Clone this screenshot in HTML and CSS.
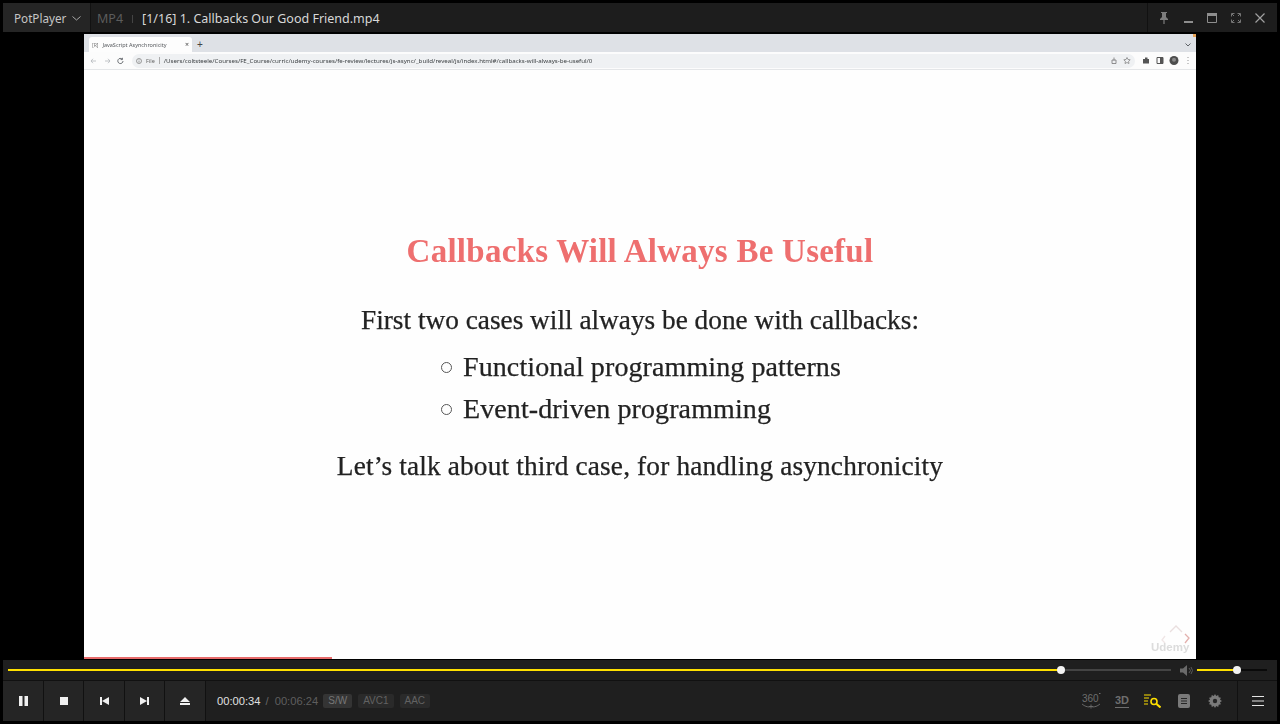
FILE: index.html
```html
<!DOCTYPE html>
<html lang="en">
<head>
<meta charset="utf-8">
<title>PotPlayer</title>
<link rel="stylesheet" href="styles.css">
</head>
<body>
<div class="player">
  <header class="titlebar">
    <div class="brand"><span>PotPlayer</span>
      <svg class="chev" width="9" height="5" viewBox="0 0 9 5"><path d="M.5.5l4 3.5 4-3.5" fill="none" stroke="#a8a8a8"/></svg>
    </div>
    <div class="title"><span class="fmt">MP4</span><span class="tick"></span><span class="name">[1/16] 1. Callbacks Our Good Friend.mp4</span></div>
    <div class="winbtns">
      <svg width="12" height="12" viewBox="0 0 12 12"><path d="M3 0h6v1H8v4l2 2v1H6.600v4H5.400V8H2V7l2-2V1H3z" fill="#7c7c7c"/></svg>
      <svg width="11" height="12" viewBox="0 0 11 12"><path d="M1 9h9v2H1z" fill="#8e8e8e"/></svg>
      <svg width="10" height="10" viewBox="0 0 10 10"><path d="M.5.500h9v9h-9z" fill="none" stroke="#8e8e8e"/><path d="M0 0h10v3H0z" fill="#8e8e8e"/></svg>
      <svg width="10" height="10" viewBox="0 0 10 10"><path d="M.5 3.500v-3h3M6.500.500h3v3M9.500 6.500v3h-3M3.500 9.500h-3v-3M1 1l2 2M9 1L7 3M9 9L7 7M1 9l2-2" fill="none" stroke="#757575"/></svg>
      <svg width="10" height="10" viewBox="0 0 10 10"><path d="M.5.500l9 9M9.500.500l-9 9" stroke="#a0a0a0" stroke-width="1.200"/></svg>
    </div>
  </header>

  <main class="stage">
    <div class="video">
      <div class="tabstrip">
        <div class="tab"><span class="favicon">[R]</span><span class="tabname">JavaScript Asynchronicity</span><span class="tabx">×</span></div>
        <span class="newtab">+</span>
        <svg class="tabmenu" width="6" height="4" viewBox="0 0 6 4"><path d="M.5.500L3 3 5.500.500" fill="none" stroke="#5f6368"/></svg>
        <span class="orange"></span>
      </div>
      <div class="toolbar">
        <svg class="nav" width="36" height="8" viewBox="0 0 36 8"><path d="M6 4H1M3 1.800L1 4l2 2.200" fill="none" stroke="#b4b7bb" stroke-width=".8"/><path d="M15 4h5M18 1.800L20 4l-2 2.200" fill="none" stroke="#b4b7bb" stroke-width=".8"/><path d="M33 4a2.600 2.600 0 1 1-.8-1.900M32.400 .8v1.800h-1.800" fill="none" stroke="#5f6368" stroke-width=".9"/></svg>
        <div class="omnibox">
          <svg width="6" height="6" viewBox="0 0 6 6"><circle cx="3" cy="3" r="2.500" fill="none" stroke="#777" stroke-width=".7"/><path d="M3 2.500v2M3 1.300v.6" stroke="#777" stroke-width=".7"/></svg>
          <span class="scheme">File</span><span class="omnisep"></span>
          <span class="url">/Users/coltsteele/Courses/FE_Course/curric/udemy-courses/fe-review/lectures/js-async/_build/reveal/js/index.html#/callbacks-will-always-be-useful/0</span>
          <svg class="omniicons" width="20" height="7" viewBox="0 0 20 7"><path d="M1 3h4v3.500H1zM3 .5v3" fill="none" stroke="#777" stroke-width=".8"/><path d="M16 .5l1 2 2.200.3-1.600 1.500.4 2.200-2-1-2 1 .4-2.200-1.600-1.500 2.200-.3z" fill="none" stroke="#777" stroke-width=".7"/></svg>
        </div>
        <svg class="exticons" width="48" height="9" viewBox="0 0 48 9"><path d="M0 3h2V1.500h2.500V3H6v4.500H0z" fill="#555"/><path d="M14 1.500h6v6h-6z" fill="none" stroke="#555"/><path d="M17 1.500h3v6h-3z" fill="#555"/><circle cx="31" cy="4.500" r="4.500" fill="#4d4d4d"/><circle cx="31" cy="3.800" r="2" fill="#8b8b8b"/><path d="M45 1v.9M45 4v.9M45 7v.9" stroke="#888"/></svg>
      </div>
      <article class="slide">
        <h1 class="slidetitle">Callbacks Will Always Be Useful</h1>
        <p class="lead">First two cases will always be done with callbacks:</p>
        <ul class="cases">
          <li>Functional programming patterns</li>
          <li>Event-driven programming</li>
        </ul>
        <p class="closing">Let’s talk about third case, for handling asynchronicity</p>
      </article>
      <div class="watermark">
        <svg width="30" height="24" viewBox="0 0 30 24"><path d="M9 9l6-6 6 6" fill="none" stroke="#eadfdf" stroke-width="1.300"/><path d="M4 13l-3 4 3 3" fill="none" stroke="#f0e6e6" stroke-width="1.300"/><path d="M24 11l4 4-4 5" fill="none" stroke="#e3b0ad" stroke-width="1.300"/></svg>
        <span>Udemy</span>
      </div>
      <div class="vprogress"></div>
    </div>
  </main>

  <footer class="controls">
    <div class="seekrow">
      <div class="seek"><div class="seekfill"></div><div class="knob"></div></div>
      <svg class="speaker" width="13" height="11" viewBox="0 0 13 11"><path d="M0 3.500h3L7 0v11L3 7.500H0z" fill="#6a6a6a"/><path d="M9 3l1.500 2.500L9 8M11 2l1.500 3.500L11 9" fill="none" stroke="#5a5a5a"/></svg>
      <div class="volume"><div class="volfill"></div><div class="knob"></div></div>
    </div>
    <div class="btnrow">
      <div class="transport">
        <button class="tbtn"><svg width="9" height="10" viewBox="0 0 9 10"><path d="M0 0h3.500v10H0zM5.500 0H9v10H5.500z" fill="#f0f0f0"/></svg></button>
        <button class="tbtn"><svg width="8" height="8" viewBox="0 0 8 8"><path d="M0 0h8v8H0z" fill="#f0f0f0"/></svg></button>
        <button class="tbtn"><svg width="9" height="8" viewBox="0 0 9 8"><path d="M0 0h2v8H0zM9 0v8L2 4z" fill="#f0f0f0"/></svg></button>
        <button class="tbtn"><svg width="9" height="8" viewBox="0 0 9 8"><path d="M9 0H7v8h2zM0 0v8l7-4z" fill="#f0f0f0"/></svg></button>
        <button class="tbtn"><svg width="10" height="8" viewBox="0 0 10 8"><path d="M5 0l5 5H0zM0 6h10v2H0z" fill="#f0f0f0"/></svg></button>
      </div>
      <div class="timeinfo">
        <span class="now">00:00:34</span><span class="slash">/</span><span class="total">00:06:24</span>
        <span class="badge sw">S/W</span><span class="badge">AVC1</span><span class="badge">AAC</span>
      </div>
      <div class="tools">
        <svg width="20" height="18" viewBox="0 0 20 18"><text x="1" y="10" class="t360">360</text><path d="M18 1.500h1.500" stroke="#6e6e6e"/><path d="M1 12c3 2.500 5 2.800 7.500 3M19 12c-3 2.500-5 2.800-7.500 3M10 12.500v4M8 14.500h4" fill="none" stroke="#6e6e6e" stroke-width=".9"/></svg>
        <svg width="14" height="16" viewBox="0 0 14 16"><text x="0" y="11" class="t3d">3D</text><path d="M0 14.500h14" stroke="#6e6e6e"/></svg>
        <svg width="17" height="14" viewBox="0 0 17 14"><path d="M0 1h7M0 4h5M0 7h4M0 10h4" stroke="#ffe000" stroke-width="1"/><circle cx="10" cy="7.500" r="3" fill="none" stroke="#ffe000" stroke-width="1.600"/><path d="M12.500 10l4 3.500" stroke="#ffe000" stroke-width="2"/></svg>
        <svg width="12" height="14" viewBox="0 0 12 14"><rect width="12" height="14" rx="2" fill="#7a7a7a"/><path d="M3 4.500h6M3 7h6M3 9.500h6" stroke="#262626"/></svg>
        <svg width="14" height="14" viewBox="0 0 14 14"><path d="M7 0l1.200 2 2-.9.500 2.200 2.200.5-.9 2L14 7l-2 1.200.9 2-2.200.5-.5 2.200-2-.9L7 14l-1.200-2-2 .9-.5-2.200-2.200-.5.9-2L0 7l2-1.200-.9-2 2.200-.5.500-2.200 2 .9z" fill="#7a7a7a"/><circle cx="7" cy="7" r="2.200" fill="#262626"/></svg>
      </div>
      <button class="menu"><svg width="12" height="10" viewBox="0 0 12 10"><path d="M0 .5h12M0 5h12M0 9.500h12" stroke="#e4e4e4"/></svg></button>
    </div>
  </footer>
</div>
</body>
</html>
```
FILE: styles.css
```css
* { box-sizing: border-box; }
html, body { margin: 0; height: 100%; background: #000; }
body { overflow: hidden; font-family: "Noto Sans", "Liberation Sans", sans-serif; }

.player { height: 724px; padding: 3px; display: flex; flex-direction: column; }

/* title bar */
.titlebar { height: 29px; display: flex; background: #1d1d1d; color: #ddd; flex: none; }
.brand { width: 88px; background: #252525; border-right: 1px solid #121212; display: flex; align-items: center; gap: 6px; padding: 1px 0 0 11px; font-size: 11.700px; color: #c6c6c6; }
.title { flex: 1; display: flex; align-items: center; padding: 2px 0 0 6px; font-size: 12.500px; }
.fmt { color: #5c5c5c; font-size: 12.500px; }
.tick { width: 1px; height: 8px; background: #444; margin: 0 9px 0 9px; }
.name { color: #d8d8d8; }
.winbtns { width: 130px; border-left: 1px solid #111; display: grid; grid-template-columns: repeat(5, 24px); justify-items: center; align-items: center; padding-left: 4px; }

/* video */
.stage { height: 628px; padding-top: 2px; display: flex; justify-content: center; flex: none; }
.video { position: relative; width: 1112px; height: 625px; background: #fefefe; display: flex; flex-direction: column; }

.tabstrip { height: 18px; background: #dee1e6; display: flex; align-items: flex-end; padding-left: 5px; position: relative; flex: none; }
.tab { width: 103px; height: 15px; background: #fdfdfd; border-radius: 3px 3px 0 0; display: flex; align-items: center; padding: 0 3px; font-size: 5.500px; color: #55585c; filter: blur(.3px); }
.favicon { margin-right: 4px; font-size: 5px; color: #777; }
.tabname { flex: 1; white-space: nowrap; }
.tabx { font-size: 7px; color: #444; }
.newtab { font-size: 10px; line-height: 15px; height: 15px; margin-left: 5px; color: #444; font-family: "Liberation Sans", sans-serif; }
.tabmenu { margin-left: auto; margin-right: 5px; margin-bottom: 5px; }
.orange { position: absolute; right: 0; top: 0; width: 3px; height: 3px; background: #e8a356; }

.toolbar { height: 18px; background: #fcfcfc; border-bottom: 1px solid #e4e6e8; display: flex; align-items: center; padding-left: 6px; flex: none; }
.nav { flex: none; }
.omnibox { width: 1003px; height: 14px; margin-left: 6px; border-radius: 7px; background: #eff1f3; display: flex; align-items: center; padding: 0 4px; filter: blur(.25px); flex: none; }
.scheme { font-size: 5.500px; color: #666; margin-left: 4px; }
.omnisep { width: 1px; height: 7px; background: #aaa; margin: 0 4px; }
.url { flex: 1; font-size: 6.150px; color: #3c4043; white-space: nowrap; }
.omniicons { flex: none; }
.exticons { margin-left: 8px; flex: none; }

.slide { flex: 1; display: flex; flex-direction: column; align-items: center; font-family: "Liberation Serif", serif; color: #222; filter: blur(.25px); -webkit-text-stroke: .25px #222; }
.slidetitle { margin: 161px 0 0; font-size: 33px; line-height: 40px; font-weight: 700; color: #ee6f6f; letter-spacing: .25px; -webkit-text-stroke: 0; }
.lead { margin: 29px 0 0; font-size: 27.300px; line-height: 40px; }
.cases { margin: 6px 0 0 357px; padding: 0; align-self: flex-start; list-style: none; font-size: 28px; line-height: 42px; letter-spacing: .1px; }
.cases li { display: flex; align-items: center; gap: 11px; }
.cases li::before { content: ""; width: 9px; height: 9px; border: 1px solid #555; border-radius: 50%; -webkit-text-stroke: 0; }
.closing { margin: 16px 0 0; font-size: 27.300px; line-height: 40px; letter-spacing: .16px; }

.watermark { position: absolute; right: 5px; bottom: 4px; width: 42px; height: 32px; color: #dcdcdc; font-family: "Liberation Sans", sans-serif; font-size: 11.500px; font-weight: 700; }
.watermark svg { position: absolute; right: 0; top: 0; }
.watermark span { position: absolute; left: 2px; bottom: 2px; filter: blur(.5px); }
.vprogress { position: absolute; left: 0; bottom: 0; width: 248px; height: 2px; background: #e86b6b; }

/* controls */
.controls { height: 61px; flex: none; background: #1f1f1f; display: flex; flex-direction: column; }
.seekrow { height: 21px; display: flex; align-items: center; padding-left: 5px; border-bottom: 1px solid #111; flex: none; }
.seek { position: relative; width: 1163px; height: 2px; background: #444; }
.seekfill { width: 1053px; height: 2px; background: #ffe000; }
.knob { position: absolute; top: -3px; width: 8px; height: 8px; border-radius: 50%; background: #f3f3f3; }
.seek .knob { left: 1049px; }
.speaker { margin-left: 9px; flex: none; }
.volume { position: relative; margin-left: 4px; width: 70px; height: 2px; background: #0a0a0a; }
.volfill { width: 40px; height: 2px; background: #ffe000; }
.volume .knob { left: 36px; }

.btnrow { flex: 1; display: flex; align-items: stretch; }
.transport { display: flex; }
.tbtn { width: 41px; padding: 0; border: 0; border-right: 1px solid #111; background: #252525; display: flex; align-items: center; justify-content: center; }
.tbtn:nth-child(2) { width: 40px; }
.tbtn:nth-child(3) { width: 41px; }
.tbtn:nth-child(4) { width: 40px; }
.tbtn:nth-child(5) { width: 41px; }
.timeinfo { flex: 1; display: flex; align-items: center; padding-left: 11px; font-family: "Liberation Sans", sans-serif; font-size: 11.200px; }
.now { color: #e0e0e0; }
.slash { color: #666; margin: 0 6px 0 5px; }
.total { color: #5e5e5e; }
.badge { height: 14px; line-height: 14px; padding: 0 5px; margin-left: 6px; border-radius: 2px; background: #2a2a2a; color: #626262; font-size: 10px; }
.badge.sw { margin-left: 5px; background: #343434; color: #777; }
.tools { display: grid; grid-template-columns: repeat(5, 31px); justify-items: center; align-items: center; margin-right: 7px; }
.t360 { font: 10px "Liberation Sans", sans-serif; fill: #6e6e6e; }
.t3d { font: 700 11px "Liberation Sans", sans-serif; fill: #6e6e6e; }
.menu { width: 40px; padding: 0; border: 0; border-left: 1px solid #111; background: transparent; display: flex; align-items: center; justify-content: center; }
```
